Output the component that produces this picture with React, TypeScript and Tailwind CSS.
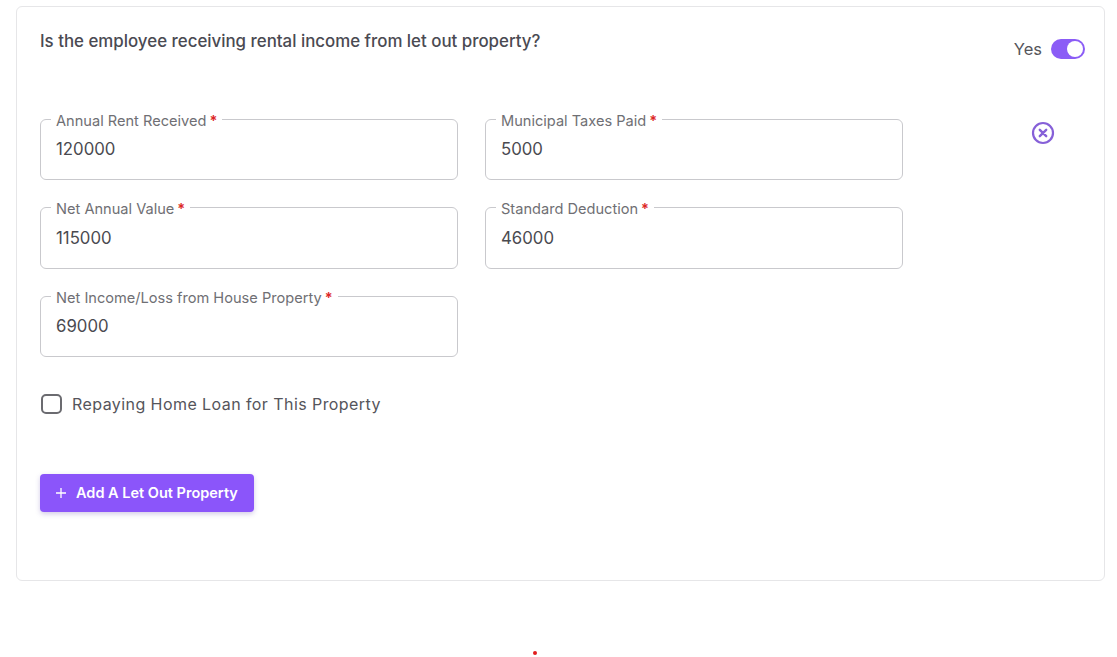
import React from "react";

function Field({ label, value }: { label: string; value: string }) {
  return (
    <fieldset className="h-[68px] w-[418px] rounded-[6px] border border-[#c9c9cd] px-[10px] min-w-0">
      <legend className="ml-0 h-[14px] px-[5px] pt-[1.5px] text-[14.6px] leading-[14px] text-[#6f6f74] whitespace-nowrap">
        {label}
        <span className="ml-[3px] text-[#dc2626] font-semibold">*</span>
      </legend>
      <div className="pl-[5px] pt-[11px] text-[16.8px] leading-[24px] text-[#4a4a50]">{value}</div>
    </fieldset>
  );
}

export default function App() {
  return (
    <div className="h-[657px] w-[1117px] overflow-hidden bg-white font-['Inter',sans-serif]">
      <div className="pl-[16px] pt-[6px]">
        <div className="h-[575px] w-[1089px] rounded-[6px] border border-[#e6e6e8] bg-white pl-[23px] pr-[19px]">
          <div className="flex items-start justify-between">
            <div className="pt-[24px] text-[16.87px] leading-[20px] font-medium text-[#4a4a52]">
              Is the employee receiving rental income from let out property?
            </div>
            <div className="flex items-center gap-[9px] pt-[32px]">
              <span className="text-[16.5px] leading-[20px] text-[#55555b]">Yes</span>
              <span className="flex h-[20px] w-[34px] items-center justify-end rounded-full bg-[#8b5cf6] pr-[2px]">
                <span className="h-[16px] w-[16px] rounded-full bg-white" />
              </span>
            </div>
          </div>

          <div className="mt-[53px] flex items-start">
            <div className="grid grid-cols-[418px_418px] gap-x-[27px] gap-y-[20.5px]">
              <Field label="Annual Rent Received" value="120000" />
              <Field label="Municipal Taxes Paid" value="5000" />
              <Field label="Net Annual Value" value="115000" />
              <Field label="Standard Deduction" value="46000" />
              <Field label="Net Income/Loss from House Property" value="69000" />
            </div>
            <svg className="ml-[127.5px] mt-[9px]" width="24" height="24" viewBox="0 0 24 24" fill="none" stroke="#8660d8" strokeWidth="2.2" strokeLinecap="round">
              <circle cx="12" cy="12" r="10" />
              <path d="M8.8 8.8l6.4 6.4M15.2 8.8l-6.4 6.4" strokeWidth="2.4" />
            </svg>
          </div>

          <div className="mt-[36px] flex items-center gap-[10px]">
            <span className="h-[20px] w-[21px] ml-[1px] rounded-[5px] border-[2.5px] border-[#6b6b70]" />
            <span className="text-[16px] leading-[22px] tracking-[0.43px] text-[#55555b]">Repaying Home Loan for This Property</span>
          </div>

          <button className="mt-[59px] flex h-[38px] w-[214px] items-center gap-[10px] rounded-[4px] bg-[#8b55fa] pl-[16px] text-[14.5px] font-semibold text-white shadow-[0_2px_5px_rgba(80,50,160,0.25)]">
            <svg width="10" height="10" viewBox="0 0 10 10" stroke="white" strokeWidth="1.3"><path d="M5 0v10M0 5h10" /></svg>
            Add A Let Out Property
          </button>
        </div>
        <div className="ml-[517px] mt-[70px] h-[4px] w-[4px] rounded-full bg-[#e11d1d]" />
      </div>
    </div>
  );
}
